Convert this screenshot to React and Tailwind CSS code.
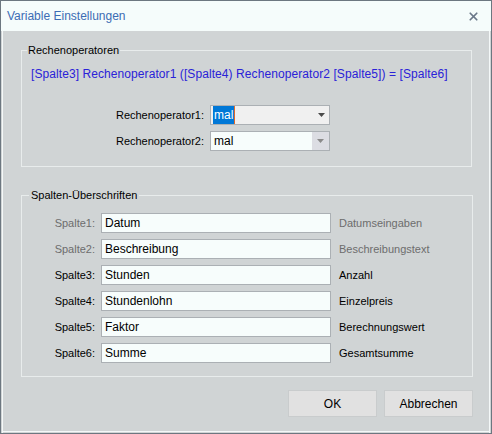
import { X } from 'lucide-react';

const spalten = [
  { label: 'Spalte1:', value: 'Datum', hint: 'Datumseingaben', muted: true },
  { label: 'Spalte2:', value: 'Beschreibung', hint: 'Beschreibungstext', muted: true },
  { label: 'Spalte3:', value: 'Stunden', hint: 'Anzahl' },
  { label: 'Spalte4:', value: 'Stundenlohn', hint: 'Einzelpreis' },
  { label: 'Spalte5:', value: 'Faktor', hint: 'Berechnungswert' },
  { label: 'Spalte6:', value: 'Summe', hint: 'Gesamtsumme' },
];

const sans = { fontFamily: '"Liberation Sans", Arial, sans-serif' };

function Arrow({ color = '#5b5b5b' }) {
  return (
    <svg width="7" height="4" viewBox="0 0 7 4">
      <path d="M0 0h7L3.5 4z" fill={color} />
    </svg>
  );
}

function Combo({ value, focused }) {
  return (
    <div className={`w-[120px] h-[20px] border border-[#abb0b4] flex items-center ${focused ? 'bg-[#f0f0f0]' : 'bg-[#f7fdfc]'}`}>
      <div className="flex-1 pl-[2px] text-[12px] leading-none">
        {focused ? (
          <span className="bg-[#0078d7] text-white px-[1px] py-[2px] border-r border-[#e06a2a]">{value}</span>
        ) : (
          <span className="text-black px-[1px]">{value}</span>
        )}
      </div>
      <div className={`w-[17px] h-full flex items-center justify-center ${focused ? 'pl-[2px]' : 'bg-[#dcdde3]'}`}>
        <Arrow color={focused ? '#4a4a4a' : '#8a8a8a'} />
      </div>
    </div>
  );
}

export default function App() {
  return (
    <div className="w-[492px] h-[434px] border border-[#6c7780] flex flex-col bg-[#f5fcfb] select-none" style={sans}>
      {/* Title bar */}
      <div className="h-[30px] flex items-center justify-between pl-[6px] pr-[11px] shrink-0">
        <span className="text-[12px] text-[#3c6cb4]">Variable Einstellungen</span>
        <X size={13} strokeWidth={3.2} className="text-[#6a7888]" />
      </div>

      {/* Content */}
      <div className="flex-1 bg-[#d0d4d5] pl-[20px] pr-[18px] pt-[12px] shadow-[inset_1px_0_0_#d0d4d5,inset_2px_0_0_#f4f8f8,inset_-1px_0_0_#d0d4d5,inset_-2px_0_0_#f4f8f8,inset_0_-1px_0_#d0d4d5,inset_0_-2px_0_#f4f8f8]">
        <fieldset className="border border-[#e8ecec] h-[124px] w-[451px] pl-[9px]">
          <legend className="ml-[-4px] px-[1px] text-[11px] leading-[14px] text-black">Rechenoperatoren</legend>
          <div className="mt-[10px] text-[12px] leading-[14px] tracking-[0.08px] text-[#2a22d8] whitespace-nowrap">
            [Spalte3] Rechenoperator1 ([Spalte4) Rechenoperator2 [Spalte5]) = [Spalte6]
          </div>
          <div className="mt-[24px] flex flex-col gap-[6px]">
            <div className="flex items-center">
              <span className="w-[173px] text-right text-[11px] text-black">Rechenoperator1:</span>
              <span className="w-[6px]" />
              <Combo value="mal" focused />
            </div>
            <div className="flex items-center">
              <span className="w-[173px] text-right text-[11px] text-black">Rechenoperator2:</span>
              <span className="w-[6px]" />
              <Combo value="mal" />
            </div>
          </div>
        </fieldset>

        <fieldset className="mt-[21px] border border-[#e8ecec] h-[189px] w-[452px]">
          <legend className="ml-[7px] px-[2px] text-[11px] leading-[14px] text-black">Spalten-Überschriften</legend>
          <div className="mt-[11px] flex flex-col gap-[6px]">
            {spalten.map((s) => (
              <div key={s.label} className="flex items-center">
                <span className={`w-[73px] text-right text-[11px] ${s.muted ? 'text-[#6d6d6d]' : 'text-black'}`}>{s.label}</span>
                <div className="ml-[6px] w-[230px] h-[20px] bg-[#f7fdfc] border border-[#abb0b4] flex items-center pl-[3px] text-[12px] text-black">
                  {s.value}
                </div>
                <span className={`ml-[8px] text-[11px] ${s.muted ? 'text-[#6d6d6d]' : 'text-black'}`}>{s.hint}</span>
              </div>
            ))}
          </div>
        </fieldset>

        <div className="mt-[13px] flex justify-end gap-[7px]">
          <button className="w-[89px] h-[27px] bg-[#e1e1e1] border border-[#c9cccd] text-[12px] text-black">OK</button>
          <button className="w-[89px] h-[27px] bg-[#e1e1e1] border border-[#c9cccd] text-[12px] text-black">Abbrechen</button>
        </div>
      </div>
    </div>
  );
}
